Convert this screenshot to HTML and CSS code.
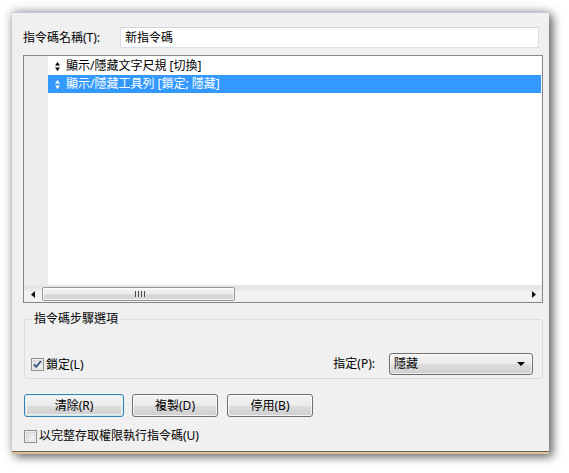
FILE: index.html
```html
<!DOCTYPE html>
<html lang="zh-Hant">
<head>
<meta charset="utf-8">
<link rel="stylesheet" href="styles.css">
</head>
<body>
<div class="desk">
  <div class="dialog">
    <div class="name-row">
      <span class="label">指令碼名稱(T):</span>
      <div class="input">新指令碼</div>
    </div>

    <div class="list">
      <div class="list-body">
        <div class="gutter"></div>
        <div class="rows">
          <div class="row">
            <svg class="grip" width="5" height="9" viewBox="0 0 5 9"><path d="M2.5 0 L5 3.5 L0 3.5 Z M0 5.5 L5 5.5 L2.5 9 Z" fill="#000"/></svg>
            <span>顯示/隱藏文字尺規 [切換]</span>
          </div>
          <div class="row sel">
            <svg class="grip" width="5" height="9" viewBox="0 0 5 9"><path d="M2.5 0 L5 3.5 L0 3.5 Z M0 5.5 L5 5.5 L2.5 9 Z" fill="#fff"/></svg>
            <span>顯示/隱藏工具列 [鎖定; 隱藏]</span>
          </div>
        </div>
      </div>
      <div class="hscroll">
        <div class="arrow-btn">
          <svg width="4" height="7" viewBox="0 0 4 7"><path d="M4 0 L0 3.5 L4 7 Z" fill="#111"/></svg>
        </div>
        <div class="track">
          <div class="thumb">
            <span class="ridges"><i></i><i></i><i></i><i></i></span>
          </div>
        </div>
        <div class="arrow-btn">
          <svg width="4" height="7" viewBox="0 0 4 7"><path d="M0 0 L4 3.5 L0 7 Z" fill="#111"/></svg>
        </div>
      </div>
    </div>

    <fieldset class="group">
      <legend>指令碼步驟選項</legend>
      <div class="group-row">
        <label class="check">
          <svg class="box" width="13" height="13" viewBox="0 0 13 13">
            <defs><linearGradient id="g1" x1="0" y1="0" x2="1" y2="1"><stop offset="0" stop-color="#dcdcdc"/><stop offset="1" stop-color="#fbfbfb"/></linearGradient></defs>
            <rect x="0.5" y="0.5" width="12" height="12" fill="#fff" stroke="#8e8f8f"/>
            <rect x="2" y="2" width="9" height="9" fill="url(#g1)" stroke="#c4c4c4" stroke-width="0.6"/>
            <path d="M3 6.3 L5.2 8.8 L10 3" fill="none" stroke="#3a4f86" stroke-width="1.8"/>
          </svg>
          <span>鎖定(L)</span>
        </label>
        <div class="spec">
          <span class="spec-label">指定(P):</span>
          <div class="select">
            <span>隱藏</span>
            <svg width="8" height="4" viewBox="0 0 8 4"><path d="M0 0 L8 0 L4 4 Z" fill="#000"/></svg>
          </div>
        </div>
      </div>
    </fieldset>

    <div class="buttons">
      <button class="btn default">清除(R)</button>
      <button class="btn">複製(D)</button>
      <button class="btn">停用(B)</button>
    </div>

    <label class="check bottom">
      <svg class="box" width="13" height="13" viewBox="0 0 13 13">
        <defs><linearGradient id="g2" x1="0" y1="0" x2="1" y2="1"><stop offset="0" stop-color="#d8d8d8"/><stop offset="1" stop-color="#f8f8f8"/></linearGradient></defs>
        <rect x="0.5" y="0.5" width="12" height="12" fill="#fff" stroke="#8e8f8f"/>
        <rect x="2" y="2" width="9" height="9" fill="url(#g2)" stroke="#c4c4c4" stroke-width="0.6"/>
      </svg>
      <span>以完整存取權限執行指令碼(U)</span>
    </label>
  </div>
</div>
</body>
</html>
```

FILE: styles.css
```css
* { box-sizing: border-box; }
html, body {
  margin: 0;
  padding: 0;
  background: #ffffff;
}
body {
  font-family: "Noto Sans", "Noto Sans CJK TC", sans-serif;
  font-size: 12px;
  color: #000;
}
.desk {
  padding: 12px 0 0 12px;
  width: 569px;
  height: 473px;
}
.dialog {
  width: 537px;
  height: 442px;
  background: #f0f0f0;
  border-top: 1px solid #c5c6dc;
  border-bottom: 2px solid #dcc39a;
  box-shadow: inset 0 -1px 0 #6e6253, 0 0 10px rgba(0,0,0,0.28), 4px 3px 9px rgba(0,0,0,0.5);
  padding: 14px 0 0 11px;
  display: flex;
  flex-direction: column;
}
.name-row {
  display: flex;
  align-items: center;
  height: 21px;
}
.label {
  width: 97px;
  line-height: 16px;
}
.input {
  width: 419px;
  height: 21px;
  background: #fff;
  border: 1px solid #dbe0e6;
  border-top-color: #cfd4da;
  padding: 0 0 0 4px;
  line-height: 19px;
}
.list {
  margin-top: 7px;
  width: 520px;
  height: 248px;
  border: 1px solid #828790;
  background: #fff;
  display: flex;
  flex-direction: column;
}
.list-body {
  flex: 1;
  display: flex;
}
.gutter {
  width: 24px;
  background: #ededed;
}
.rows {
  flex: 1;
  padding: 1px 1px 0 0;
}
.row {
  height: 18px;
  display: flex;
  align-items: center;
  padding-left: 7px;
  line-height: 16px;
  white-space: pre;
}
.row .grip {
  margin-right: 6px;
  flex: none;
}
.row.sel {
  background: #3399ff;
  color: #fff;
}
.hscroll {
  height: 17px;
  display: flex;
  background: linear-gradient(#e3e3e3, #f2f2f2 40%, #f0f0f0);
  border-top: 1px solid #e9e9e9;
}
.arrow-btn {
  width: 17px;
  display: flex;
  align-items: center;
  justify-content: center;
}
.track {
  flex: 1;
  padding: 1px 0;
}
.thumb {
  width: 193px;
  height: 14px;
  margin-left: 1px;
  border: 1px solid #979797;
  border-radius: 2px;
  background: linear-gradient(#f4f4f4, #ebebeb 50%, #dcdcdc 51%, #d4d4d4);
  box-shadow: inset 0 0 0 1px rgba(255,255,255,0.7);
  display: flex;
  align-items: center;
  justify-content: center;
}
.ridges {
  display: flex;
  gap: 1px;
  padding-left: 4px;
}
.ridges i {
  width: 2px;
  height: 6px;
  background: linear-gradient(90deg, #4a4a4a 50%, #e8e8e8 50%);
}
.group {
  margin: 8px 0 0 1px;
  width: 519px;
  height: 68px;
  border: 1px solid #d5dfe5;
  border-radius: 3px;
  padding: 0 9px 0 6px;
  min-width: 0;
}
.group legend {
  margin-left: 1px;
  padding: 0 2px;
  line-height: 16px;
}
.group-row {
  margin-top: 26px;
  display: flex;
  align-items: center;
  justify-content: space-between;
  height: 22px;
}
.check {
  display: flex;
  align-items: center;
  line-height: 16px;
}
.check .box {
  margin-right: 2px;
  flex: none;
}
.group .check {
  margin-top: 1px;
}
.spec {
  display: flex;
  align-items: center;
}
.spec-label {
  margin-right: 14px;
  line-height: 16px;
}
.select {
  width: 144px;
  height: 22px;
  border: 1px solid #707070;
  border-radius: 3px;
  background: linear-gradient(#f2f2f2, #ebebeb 50%, #dddddd 51%, #cfcfcf);
  box-shadow: inset 0 0 0 1px rgba(255,255,255,0.6);
  display: flex;
  align-items: center;
  justify-content: space-between;
  padding: 0 7px 0 4px;
  line-height: 16px;
}
.buttons {
  margin-top: 15px;
  display: flex;
  gap: 8px;
  padding-left: 1px;
}
.btn {
  font: inherit;
  color: #000;
  width: 86px;
  height: 23px;
  padding: 0;
  border: 1px solid #707070;
  border-radius: 3px;
  background: linear-gradient(#f2f2f2, #ebebeb 50%, #dddddd 51%, #cfcfcf);
  box-shadow: inset 0 0 0 1px rgba(255,255,255,0.75);
  line-height: 16px;
}
.btn.default {
  width: 100px;
  border-color: #3c7fb1;
  box-shadow: inset 0 0 0 1px rgba(72,215,251,0.2), inset 0 0 0 2px rgba(255,255,255,0.6);
}
.buttons .btn + .btn + .btn {
  margin-left: 1px;
}
.check.bottom {
  margin-top: 11px;
  margin-left: 1px;
}
```
